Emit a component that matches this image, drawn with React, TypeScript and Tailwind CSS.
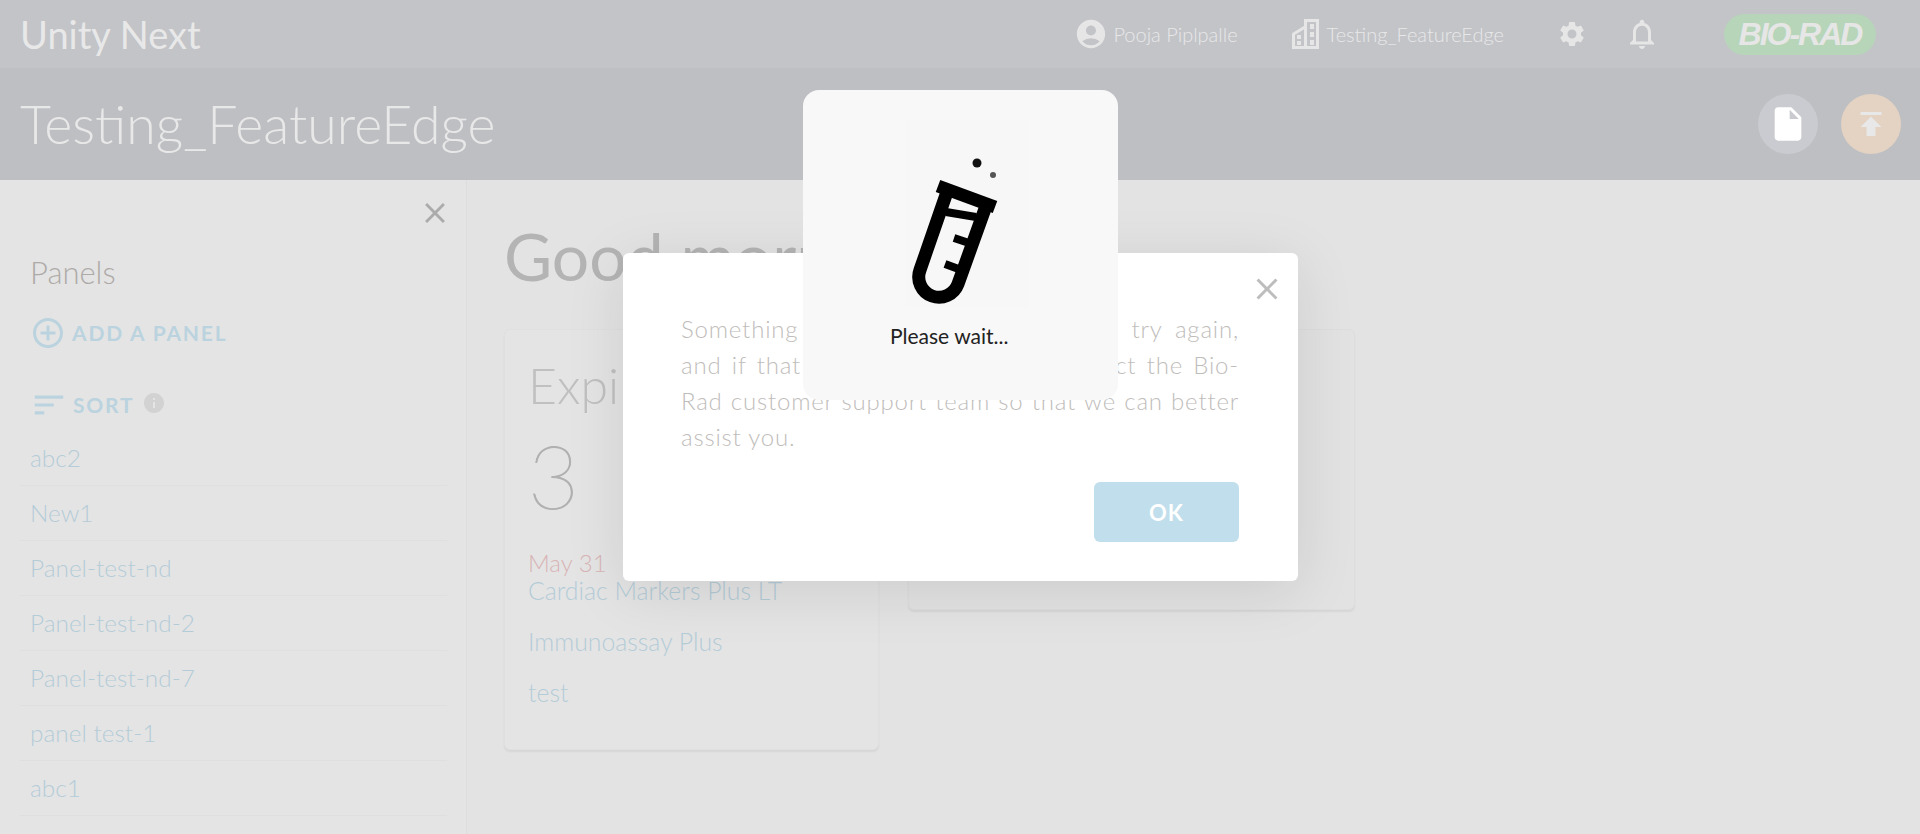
import React from "react";
import {
  MdAccountCircle,
  MdAddCircleOutline,
  MdClose,
  MdInfo,
  MdInsertDriveFile,
  MdNotificationsNone,
  MdPublish,
  MdSettings,
  MdSort,
} from "react-icons/md";

const panels = ["abc2", "New1", "Panel-test-nd", "Panel-test-nd-2", "Panel-test-nd-7", "panel test-1", "abc1"];

const BuildingIcon = () => (
  <svg width="27" height="30" viewBox="0 0 27 30" fill="#e6e6e6">
    <path d="M13.5 28.5V1.5H25.5V28.5" fill="none" stroke="#e6e6e6" strokeWidth="3" />
    <path d="M1.5 28.5V15L13 8" fill="none" stroke="#e6e6e6" strokeWidth="3" />
    <path d="M0 27h27v3H0z" />
    <path d="M18 5h4v5h-4zM18 13h4v5h-4zM18 21h4v5h-4zM5 16h4v4H5zM5 22h4v4H5z" />
  </svg>
);

const TestTube = () => (
  <svg width="124" height="187" viewBox="25 -10 124 187" fill="none" stroke="#000">
    <circle cx="97" cy="33" r="4.5" fill="#111" stroke="none" />
    <circle cx="113" cy="45" r="3" fill="#555" stroke="none" />
    <path d="M58 56L115 77" strokeWidth="13" />
    <path d="M67 62L40 140A20 20 0 0 0 78 154L106 76" strokeWidth="13" />
    <path d="M66 82L96 87" strokeWidth="8" />
    <path d="M74 108L92 114" strokeWidth="8" />
    <path d="M65 134L84 141" strokeWidth="8" />
  </svg>
);

const WaitCard = () => (
  <div className="absolute left-[803px] top-[90px] z-20 flex h-[310px] w-[315px] flex-col rounded-2xl bg-[#f8f8f8] pt-[30px]">
    <div className="ml-[102px] h-[187px] w-[124px] bg-[#f7f7f7]">
      <TestTube />
    </div>
    <p className="ml-[87px] mt-[15px] text-[21px] leading-[28px] text-[#222222]">Please wait...</p>
  </div>
);

const ErrorModal = () => (
  <div className="absolute left-[623px] top-[253px] z-10 h-[328px] w-[675px] rounded-md bg-white pl-[58px] pr-[59px] pt-[58px] shadow-[0_10px_60px_rgba(0,0,0,0.1)]">
    <button className="absolute right-[13px] top-[18px] text-[#bdbdbd]">
      <MdClose size={36} />
    </button>
    <p className="text-justify text-[24px] font-light leading-[36px] tracking-[0.8px] text-[#bfbdbb]">
      Something went wrong earlier. Please try again, and if that doesn't work, please contact the Bio-Rad customer support team so that we can better assist you.
    </p>
    <div className="mt-[27px] flex justify-end">
      <button className="h-[60px] w-[145px] rounded-md bg-[#c1deec] text-[22px] font-bold tracking-[1px] text-white">OK</button>
    </div>
  </div>
);

export default function App() {
  return (
    <div className="relative h-[834px] w-[1920px] overflow-hidden bg-[#e3e3e3] font-['Lato','Open_Sans',sans-serif]">
      <header className="flex h-[68px] items-center bg-[#c3c4c8] pl-[20px] text-[#e8e8e8]">
        <span className="text-[38px]">Unity Next</span>
        <div className="ml-auto flex items-center">
          <MdAccountCircle size={34} className="text-[#e6e6e6]" />
          <span className="ml-[5px] text-[20px] font-light">Pooja Piplpalle</span>
          <div className="ml-[54px]"><BuildingIcon /></div>
          <span className="ml-[8px] text-[20px] font-light">Testing_FeatureEdge</span>
          <MdSettings size={30} className="ml-[53px] text-[#e6e6e6]" />
          <MdNotificationsNone size={36} className="ml-[37px] text-[#e6e6e6]" />
          <div className="ml-[64px] mr-[44px] flex h-[41px] w-[152px] items-center justify-center rounded-[21px] bg-[#b7d5b9] font-['Liberation_Sans',sans-serif] text-[32px] font-bold italic tracking-[-2px] text-[#e6e6e6]">
            BIO-RAD
          </div>
        </div>
      </header>

      <div className="flex h-[112px] items-center bg-[#bebfc3] pl-[20px] pr-[19px]">
        <h1 className="text-[53.6px] font-light leading-none text-[#e8e8e8]">Testing_FeatureEdge</h1>
        <div className="ml-auto flex gap-[23px]">
          <div className="flex h-[60px] w-[60px] items-center justify-center rounded-full bg-[#cacbd0] text-white">
            <MdInsertDriveFile size={40} />
          </div>
          <div className="flex h-[60px] w-[60px] items-center justify-center rounded-full bg-[#e4d2c2] text-[#e8e8e8]">
            <MdPublish size={36} />
          </div>
        </div>
      </div>

      <div className="flex h-[654px]">
        <aside className="h-full w-[467px] shrink-0 border-r border-[#dddddd] bg-[#e4e4e4] pl-[20px] pr-[19px]">
          <div className="flex justify-end pt-[16px]">
            <MdClose size={34} className="mr-[-5px] text-[#ababab]" />
          </div>
          <h2 className="ml-[10px] mt-[24px] text-[31px] font-light leading-[36px] text-[#aeaaa8]">Panels</h2>
          <div className="ml-[10px] mt-[25px] flex items-center">
            <MdAddCircleOutline size={36} className="text-[#bad3df]" />
            <span className="ml-[6px] text-[21px] font-bold tracking-[1.8px] text-[#bad3df]">ADD A PANEL</span>
          </div>
          <div className="ml-[10px] mt-[35px] flex items-center">
            <MdSort size={38} className="text-[#bad3df]" />
            <span className="ml-[5px] text-[21px] font-bold tracking-[1.8px] text-[#bad3df]">SORT</span>
            <MdInfo size={24} className="ml-[8px] mt-[-4px] text-[#d2d2d2]" />
          </div>
          <ul className="mt-[7px]">
            {panels.map((name) => (
              <li key={name} className="flex h-[55px] items-center border-b border-[#dfdfdf] pl-[10px] text-[24.4px] font-light text-[#b4ccd8]">
                {name}
              </li>
            ))}
          </ul>
        </aside>

        <main className="flex-1 pl-[37px]">
          <h2 className="mt-[36px] text-[66px] leading-[80px] text-[#b4b4b4]">Good morning</h2>
          <div className="mt-[33px] flex items-start gap-[29px]">
            <section className="h-[421px] w-[375px] rounded-md border border-[#e0e0e0] bg-[#e4e4e4] px-[23px] pt-[26px] shadow-[0_2px_2px_rgba(0,0,0,0.06)]">
              <h3 className="text-[50px] font-light leading-[58px] text-[#c0c0c0]">Expiring</h3>
              <p className="mt-[13px] text-[88px] font-thin leading-[96px] text-[#b0b0b0] [-webkit-text-stroke:1px_#b0b0b0]">3</p>
              <p className="mt-[26px] text-[24px] font-light leading-[28px] text-[#d8b4b6]">May 31</p>
              <p className="text-[24.8px] font-light leading-[28px] text-[#b4ccd8]">Cardiac Markers Plus LT</p>
              <p className="mt-[23px] text-[24.8px] font-light leading-[28px] text-[#b4ccd8]">Immunoassay Plus</p>
              <p className="mt-[23px] text-[24.8px] font-light leading-[28px] text-[#b4ccd8]">test</p>
            </section>
            <section className="h-[281px] w-[447px] rounded-md border border-[#dedede] bg-[#e2e2e2] shadow-[0_2px_2px_rgba(0,0,0,0.06)]" />
          </div>
        </main>
      </div>

      <ErrorModal />
      <WaitCard />
    </div>
  );
}
